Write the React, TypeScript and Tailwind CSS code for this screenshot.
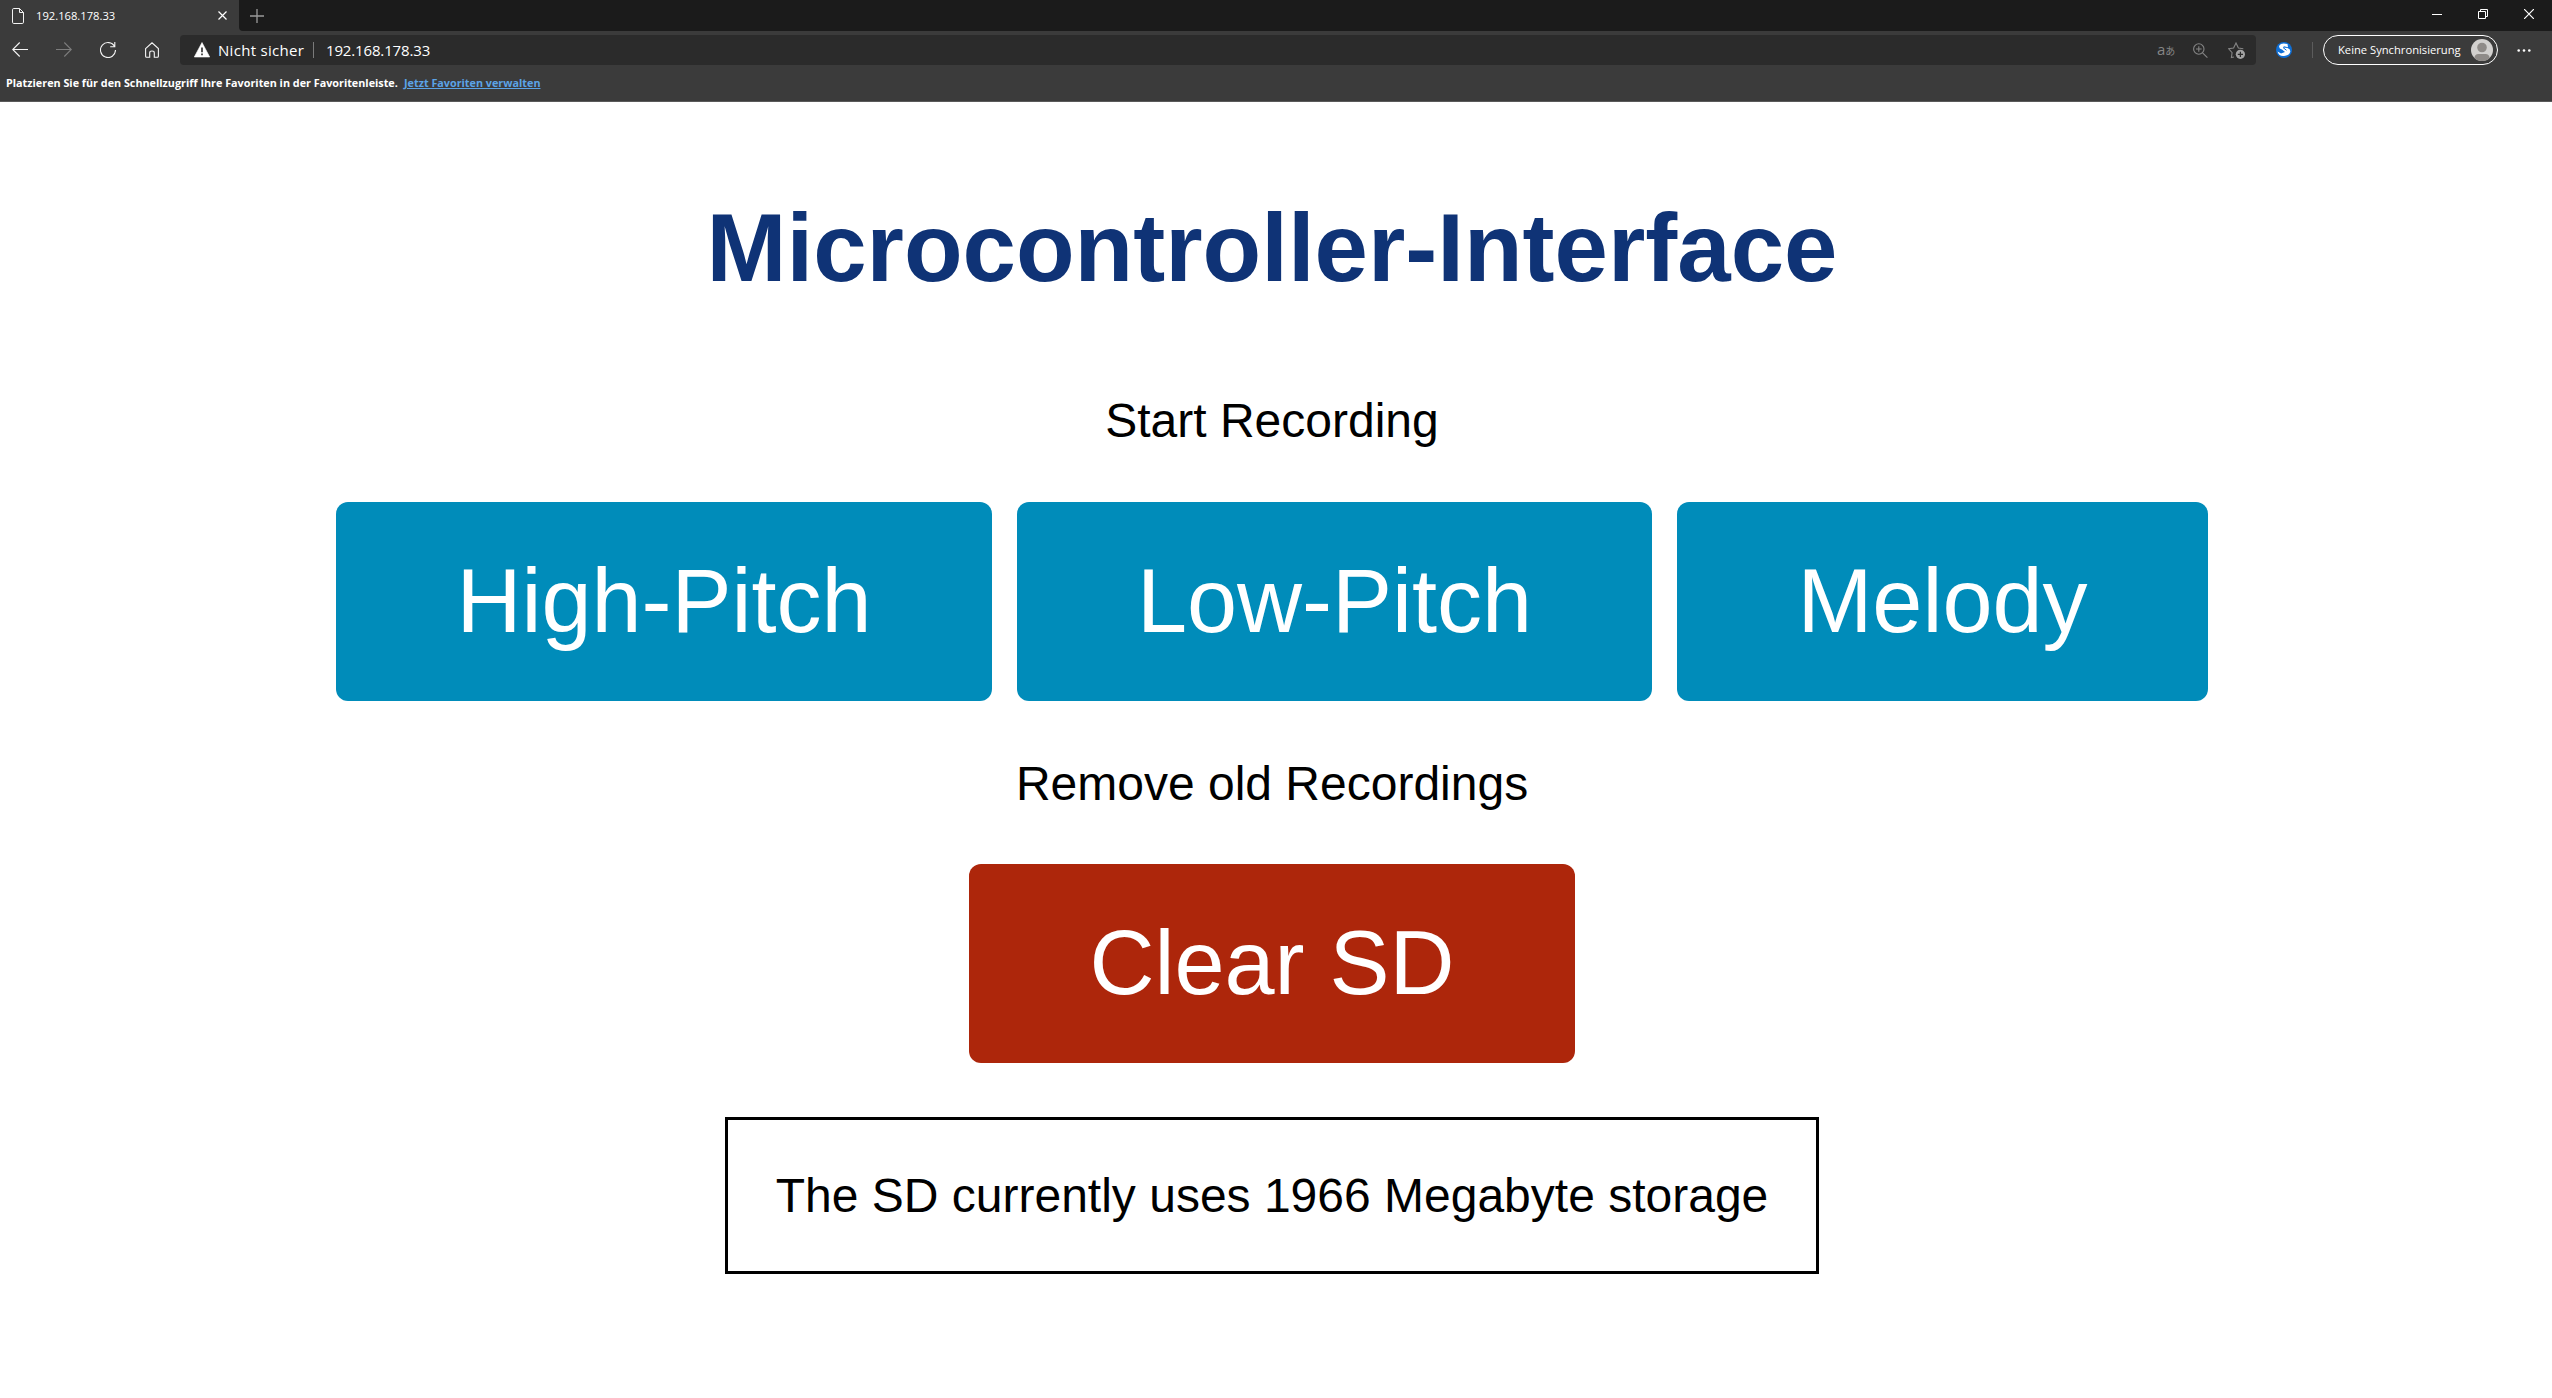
import React from "react";

const ui = "font-['Open_Sans','Noto_Sans_CJK_JP',sans-serif]";

function TabStrip() {
  return (
    <div className="flex h-[31px] bg-[#1b1b1b]">
      <div className="flex w-[239px] items-center bg-[#3b3b3b] pl-3 pr-3">
        <svg className="h-4 w-3" viewBox="0 0 12 16" fill="none" stroke="#f2f2f2">
          <path d="M7.5.5H1.8Q.5.5.5 1.8v12.4q0 1.3 1.3 1.3h8.4q1.3 0 1.3-1.3V4.5zM7.5.5v4h4" />
        </svg>
        <span className="ml-3 text-[11.2px] leading-4 text-white">192.168.178.33</span>
        <svg className="ml-auto h-[9px] w-[9px]" viewBox="0 0 9 9" stroke="#fff" strokeWidth="1.2">
          <path d="M.5.5l8 8M8.5.5l-8 8" />
        </svg>
      </div>
      <div className="flex flex-1 items-center bg-[#3b3b3b]">
        <div className="flex h-full flex-1 items-center rounded-bl bg-[#1b1b1b] pl-[11px]">
          <svg className="h-[14px] w-[14px]" viewBox="0 0 14 14" stroke="#9a9a9a">
            <path d="M7 0v14M0 7h14" strokeWidth="1.3" />
          </svg>
          <svg className="ml-auto mr-9 mb-1 h-[10px] w-[10px]" viewBox="0 0 10 10" stroke="#fff">
            <path d="M0 5.5h10" />
          </svg>
          <svg className="mr-9 mb-1 h-[10px] w-[10px]" viewBox="0 0 10 10" fill="none" stroke="#fff">
            <path d="M.5 2.5h7v7h-7zM2.5 2.5v-2h7v7h-2" />
          </svg>
          <svg className="mr-[18px] mb-1 h-[10px] w-[10px]" viewBox="0 0 10 10" stroke="#fff" strokeWidth="1.2">
            <path d="M0 0l10 10M10 0L0 10" />
          </svg>
        </div>
      </div>
    </div>
  );
}

function Toolbar() {
  return (
    <div className="flex h-[38px] items-center text-white">
      <svg className="ml-3 h-4 w-4" viewBox="0 0 16 16" fill="none" stroke="#f5f5f5" strokeWidth="1.1">
        <path d="M16 7.5H.7M7.7.5l-7 7 7 7" />
      </svg>
      <svg className="ml-7 h-4 w-4" viewBox="0 0 16 16" fill="none" stroke="#7d7d7d" strokeWidth="1.1">
        <path d="M0 7.5h15.3M8.3.5l7 7-7 7" />
      </svg>
      <svg className="ml-7 h-4 w-4" viewBox="0 0 16 16" fill="none" stroke="#f5f5f5" strokeWidth="1.1">
        <path d="M14.6 4.5A7.5 7.5 0 1 0 15.5 8M14.8 0v4.7h-4.6" />
      </svg>
      <svg className="ml-[29px] h-4 w-[14px]" viewBox="0 0 14 16" fill="none" stroke="#f5f5f5" strokeWidth="1.1">
        <path d="M.6 6.6L7 .8l6.4 5.8v7.6q0 1-1 1H9.3v-4.4Q9.3 9 7 9t-2.3 1.8v4.4H1.6q-1 0-1-1z" />
      </svg>
      <div className="ml-[21px] flex h-[30px] w-[2076px] items-center rounded bg-[#2b2b2b] pl-[14px] pr-[11px]">
        <svg className="h-4 w-4" viewBox="0 0 16 16">
          <path d="M8 .5L15.7 15H.3z" fill="#fff" stroke="#fff" strokeWidth=".6" strokeLinejoin="round" />
          <path d="M8 5.5v4.800M8 11.500v1.700" stroke="#2b2b2b" strokeWidth="1.6" />
        </svg>
        <span className="ml-2 w-[95px] text-[15px] leading-5 tracking-[0.02em]">Nicht sicher</span>
        <span className="h-4 w-px bg-[#7a7a7a]" />
        <span className="ml-3 text-[15px] leading-5 tracking-[-0.01em]">192.168.178.33</span>
        <span className="ml-auto flex w-[18px] items-baseline whitespace-nowrap leading-4 text-[#858585]">
          <span className="text-[15px]">a</span>
          <span className="text-[10px]">あ</span>
        </span>
        <svg className="ml-[18px] h-[15px] w-[15px]" viewBox="0 0 15 15" fill="none" stroke="#858585" strokeWidth="1.1">
          <circle cx="5.8" cy="6" r="5.2" />
          <path d="M9.6 9.8l4.8 4.8M5.8 3.200v5.600M3 6h5.600" />
        </svg>
        <svg className="ml-5 h-[17px] w-[17px]" viewBox="0 0 17 17" fill="none">
          <path d="M6 15l-2.6.6.7-5L.7 6.8l4.9-.8L8 1l2.4 5 4.9.8" stroke="#858585" strokeWidth="1.1" />
          <circle cx="12.4" cy="12.3" r="4.6" fill="#a3a3a3" />
          <path d="M12.4 9.7v5.200M9.800 12.300H15" stroke="#2b2b2b" strokeWidth="1.2" />
        </svg>
      </div>
      <svg className="ml-5 h-4 w-4" viewBox="0 0 16 16">
        <circle cx="8" cy="8" r="8" fill="#0f6fd6" />
        <path d="M11.500 2Q5 .2 3.200 3.800 2.500 6.500 6 7.500L9 10 5 11.500 1.500 9.500Q3 14.500 8 14q5.500-.5 6.300-4.500.2-2.500-2.800-3.500L7 5.500 8 4.200l4 1Z" fill="#fff" />
        <path d="M7 5.500l3.500 2.800" stroke="#0f6fd6" strokeWidth="1" />
      </svg>
      <span className="ml-5 h-4 w-px bg-[#5c5c5c]" />
      <div className="ml-[10px] flex h-[30px] w-[175px] items-center rounded-full border border-white pl-[14px] pr-1">
        <span className="whitespace-nowrap text-[11.2px] leading-4">Keine Synchronisierung</span>
        <svg className="ml-auto h-[22px] w-[22px]" viewBox="0 0 22 22">
          <clipPath id="avatar">
            <circle cx="11" cy="11" r="11" />
          </clipPath>
          <g clipPath="url(#avatar)">
            <rect width="22" height="22" fill="#d2d0ce" />
            <circle cx="11" cy="8.500" r="4.800" fill="#8f8b88" />
            <path d="M3 22q0-7 4-7h8q4 0 4 7z" fill="#8f8b88" />
          </g>
        </svg>
      </div>
      <svg className="ml-[19px] h-[3px] w-[14px]" viewBox="0 0 14 3" fill="#fff">
        <circle cx="1.700" cy="1.500" r="1.300" />
        <circle cx="7" cy="1.500" r="1.300" />
        <circle cx="12.300" cy="1.500" r="1.300" />
      </svg>
    </div>
  );
}

function FavoritesBar() {
  return (
    <div className="flex h-[33px] items-start border-b border-[#5a5a5a] pl-1.5 pt-[5px] text-[10.8px] font-bold leading-[18px] text-white">
      <span className="w-[391px] whitespace-nowrap">
        Platzieren Sie für den Schnellzugriff Ihre Favoriten in der Favoritenleiste.
      </span>
      <span className="ml-[7px] whitespace-nowrap text-[#5ba3e6] underline">Jetzt Favoriten verwalten</span>
    </div>
  );
}

function Action({ children, danger }: { children: React.ReactNode; danger?: boolean }) {
  return (
    <button
      className={`rounded-xl px-[120px] py-12 text-[90px] leading-[103px] text-white ${danger ? "bg-[#ad260b]" : "bg-[#008cba]"}`}
    >
      {children}
    </button>
  );
}

export default function App() {
  return (
    <div className="h-[1398px] overflow-hidden bg-white">
      <header className={`h-[102px] bg-[#3b3b3b] ${ui}`}>
        <TabStrip />
        <Toolbar />
        <FavoritesBar />
      </header>
      <main className="flex flex-col items-center pr-2 pt-[91px] font-['Liberation_Sans',Arial,sans-serif] text-5xl leading-[55px] text-black">
        <h1 className="text-8xl font-bold leading-[110px] text-[#0f3376]">Microcontroller-Interface</h1>
        <p className="mt-[90px]">Start Recording</p>
        <div className="mt-[54px] flex gap-[25.3px]">
          <Action>High-Pitch</Action>
          <Action>Low-Pitch</Action>
          <Action>Melody</Action>
        </div>
        <p className="mt-[55px]">Remove old Recordings</p>
        <div className="mt-[53px] flex">
          <Action danger>Clear SD</Action>
        </div>
        <p className="mt-[54px] border-[3px] border-black p-12">The SD currently uses 1966 Megabyte storage</p>
      </main>
    </div>
  );
}
